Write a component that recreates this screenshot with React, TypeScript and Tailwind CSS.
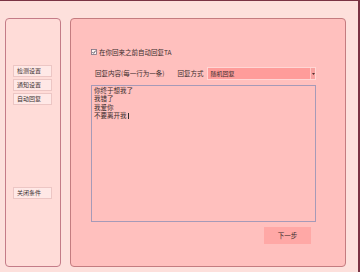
import React from 'react';

const FONT = { fontFamily: '"Noto Sans CJK SC", "Noto Sans", sans-serif' };

const SIDE_TOP = ['检测设置', '通知设置', '自动回复'];

const REPLIES = ['你终于想我了', '我错了', '我爱你', '不要离开我'];

function SideButton({ label }: { label: string }) {
  return (
    <div className="w-[39px] h-[12px] flex items-center pl-[3px] bg-[#ffe8e6] border border-[#ecc6c4] text-[6px] leading-none text-[#3a3030]">
      {label}
    </div>
  );
}

export default function App() {
  return (
    <div
      className="w-[360px] h-[272px] bg-[#fde0dc] border-t border-t-[#7a3444] border-r-2 border-r-[#7a3444] flex pl-[5px] pt-[17px] overflow-hidden"
      style={FONT}
    >
      {/* Left nav */}
      <div className="w-[56px] h-[249px] shrink-0 rounded-[4px] border border-[#c47c88] bg-[#ffdcd8] flex flex-col pl-[7px] pt-[46px]">
        <div className="flex flex-col gap-[2px]">
          {SIDE_TOP.map((s) => (
            <SideButton key={s} label={s} />
          ))}
        </div>
        <div className="mt-[82px]">
          <SideButton label="关闭条件" />
        </div>
      </div>

      {/* Main panel */}
      <div className="ml-[9px] w-[276px] h-[249px] shrink-0 rounded-[4px] border border-[#c47c80] bg-[#ffc0be] flex flex-col pl-[20px] pt-[28px] text-[#3a2c2c]">
        <div className="flex items-center gap-[2px] h-[10px]">
          <svg width="6" height="6" viewBox="0 0 6 6" className="shrink-0">
            <rect x="0.5" y="0.5" width="5" height="5" fill="#fff4f2" stroke="#7a7080" strokeWidth="0.8" />
            <path d="M1.4 3.1 L2.6 4.3 L4.7 1.6" fill="none" stroke="#303040" strokeWidth="0.8" />
          </svg>
          <span className="text-[6.5px] leading-none">在你回来之前自动回复TA</span>
        </div>

        <div className="flex items-center mt-[10px] h-[13px] w-[225px]">
          <span className="text-[6.5px] leading-none ml-[4px]">回复内容(每一行为一条)</span>
          <span className="text-[6.5px] leading-none ml-[13px]">回复方式</span>
          <div className="ml-[4px] flex-1 h-[13px] bg-[#ff9c9a] border border-[#ffd6d4] flex items-center justify-between">
            <span className="text-[6px] leading-none pl-[2px]">随机回复</span>
            <div className="w-[5px] h-full flex items-center justify-center bg-[#f8a2a0] border-l border-[#ffc8c6]">
              <svg width="3" height="2" viewBox="0 0 3 2">
                <path d="M0 0 H3 L1.5 2 Z" fill="#503030" />
              </svg>
            </div>
          </div>
        </div>

        <div className="mt-[5px] w-[225px] h-[137px] border border-[#a69ab8] bg-[#ffc0be] pl-[2px] pt-0 text-[6.5px] leading-[8.3px]">
          {REPLIES.map((r, i) => (
            <p key={r}>
              {r}
              {i === REPLIES.length - 1 && <span className="inline-block w-px h-[6px] bg-[#303030] ml-px align-middle" />}
            </p>
          ))}
        </div>

        <div className="w-[225px] flex justify-end mt-[5px]">
          <div className="w-[47px] h-[17px] mr-[5px] bg-[#ffa8a6] flex items-center justify-center text-[6.5px] leading-none">
            下一步
          </div>
        </div>
      </div>
    </div>
  );
}
